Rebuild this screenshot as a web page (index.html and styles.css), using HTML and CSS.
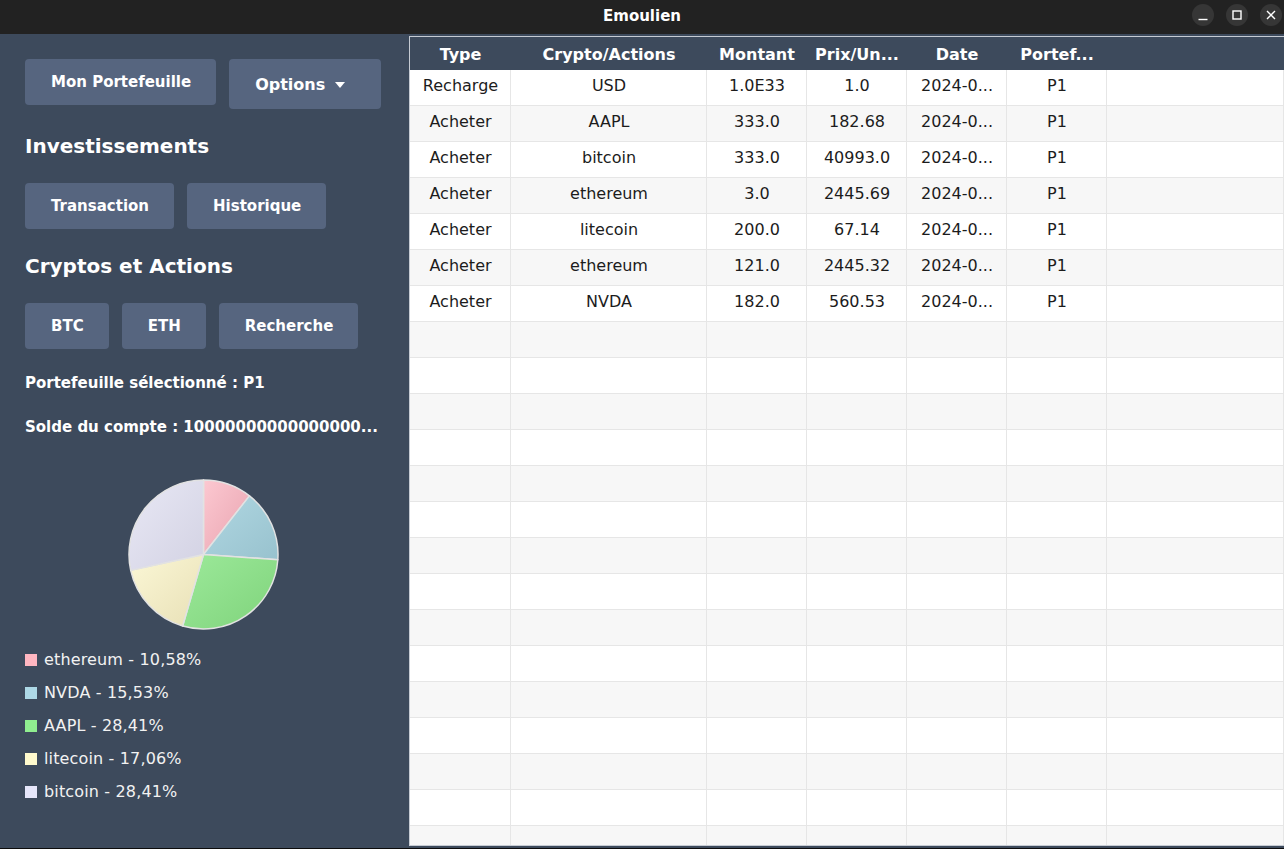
FILE: index.html
```html
<!DOCTYPE html>
<html lang="fr">
<head>
<meta charset="utf-8">
<title>Emoulien</title>
<link rel="stylesheet" href="styles.css">
</head>
<body>
<div class="window">
  <header class="titlebar">
    <div class="title">Emoulien</div>
    <div class="controls">
      <span class="ctl"><svg width="22" height="22" viewBox="0 0 22 22"><path d="M6.5 15.5h9" stroke="#fff" stroke-width="1.4" fill="none"/></svg></span>
      <span class="ctl"><svg width="22" height="22" viewBox="0 0 22 22"><rect x="7" y="7" width="8" height="8" stroke="#fff" stroke-width="1.4" fill="none"/></svg></span>
      <span class="ctl"><svg width="22" height="22" viewBox="0 0 22 22"><path d="M7 7l8 8M15 7l-8 8" stroke="#fff" stroke-width="1.4" fill="none"/></svg></span>
    </div>
  </header>
  <main class="main">
    <aside class="sidebar">
      <div class="btn-row top-row">
        <button class="btn">Mon Portefeuille</button>
        <button class="btn btn-menu">Options <span class="caret"></span></button>
      </div>
      <h2 class="heading">Investissements</h2>
      <div class="btn-row">
        <button class="btn">Transaction</button>
        <button class="btn">Historique</button>
      </div>
      <h2 class="heading">Cryptos et Actions</h2>
      <div class="btn-row">
        <button class="btn">BTC</button>
        <button class="btn">ETH</button>
        <button class="btn">Recherche</button>
      </div>
      <p class="info first">Portefeuille sélectionné : P1</p>
      <p class="info second">Solde du compte : 10000000000000000...</p>
      <svg class="pie" width="151" height="151" viewBox="-75.5 -75.5 151 151">
        <defs>
          <linearGradient id="gPink" x1="0" y1="0" x2="1" y2="1"><stop offset="0" stop-color="#fcc8d1"/><stop offset="1" stop-color="#e8a3af"/></linearGradient>
          <linearGradient id="gBlue" x1="0" y1="0" x2="1" y2="1"><stop offset="0" stop-color="#b0d7e2"/><stop offset="1" stop-color="#98c2ce"/></linearGradient>
          <linearGradient id="gGreen" x1="0" y1="0" x2="1" y2="1"><stop offset="0" stop-color="#9ce99a"/><stop offset="1" stop-color="#7fd37b"/></linearGradient>
          <linearGradient id="gYellow" x1="0" y1="0" x2="1" y2="1"><stop offset="0" stop-color="#fbf7d6"/><stop offset="1" stop-color="#e8e0b6"/></linearGradient>
          <linearGradient id="gLav" x1="0" y1="0" x2="1" y2="1"><stop offset="0" stop-color="#e8e8f5"/><stop offset="1" stop-color="#d3d2e3"/></linearGradient>
        </defs>
        <g stroke="#e2e2e2" stroke-width="1.5" stroke-linejoin="round">
          <path d="M0 0L0 -74.5A74.5 74.5 0 0 1 45.95 -58.64Z" fill="url(#gPink)"/>
          <path d="M0 0L45.95 -58.64A74.5 74.5 0 0 1 74.32 5.2Z" fill="url(#gBlue)"/>
          <path d="M0 0L74.32 5.2A74.5 74.5 0 0 1 -20.87 71.51Z" fill="url(#gGreen)"/>
          <path d="M0 0L-20.87 71.51A74.5 74.5 0 0 1 -72.79 15.88Z" fill="url(#gYellow)"/>
          <path d="M0 0L-72.79 15.88A74.5 74.5 0 0 1 0 -74.5Z" fill="url(#gLav)"/>
        </g>
      </svg>
      <ul class="legend">
        <li><span class="sw sw-pink"></span>ethereum - 10,58%</li>
        <li><span class="sw sw-blue"></span>NVDA - 15,53%</li>
        <li><span class="sw sw-green"></span>AAPL - 28,41%</li>
        <li><span class="sw sw-yellow"></span>litecoin - 17,06%</li>
        <li><span class="sw sw-lav"></span>bitcoin - 28,41%</li>
      </ul>
    </aside>
    <section class="table-wrap">
      <div class="row head">
        <div class="cell">Type</div><div class="cell">Crypto/Actions</div><div class="cell">Montant</div><div class="cell">Prix/Un...</div><div class="cell">Date</div><div class="cell">Portef...</div><div class="cell"></div>
      </div>
      <div class="row"><div class="cell">Recharge</div><div class="cell">USD</div><div class="cell">1.0E33</div><div class="cell">1.0</div><div class="cell">2024-0...</div><div class="cell">P1</div><div class="cell"></div></div>
      <div class="row"><div class="cell">Acheter</div><div class="cell">AAPL</div><div class="cell">333.0</div><div class="cell">182.68</div><div class="cell">2024-0...</div><div class="cell">P1</div><div class="cell"></div></div>
      <div class="row"><div class="cell">Acheter</div><div class="cell">bitcoin</div><div class="cell">333.0</div><div class="cell">40993.0</div><div class="cell">2024-0...</div><div class="cell">P1</div><div class="cell"></div></div>
      <div class="row"><div class="cell">Acheter</div><div class="cell">ethereum</div><div class="cell">3.0</div><div class="cell">2445.69</div><div class="cell">2024-0...</div><div class="cell">P1</div><div class="cell"></div></div>
      <div class="row"><div class="cell">Acheter</div><div class="cell">litecoin</div><div class="cell">200.0</div><div class="cell">67.14</div><div class="cell">2024-0...</div><div class="cell">P1</div><div class="cell"></div></div>
      <div class="row"><div class="cell">Acheter</div><div class="cell">ethereum</div><div class="cell">121.0</div><div class="cell">2445.32</div><div class="cell">2024-0...</div><div class="cell">P1</div><div class="cell"></div></div>
      <div class="row"><div class="cell">Acheter</div><div class="cell">NVDA</div><div class="cell">182.0</div><div class="cell">560.53</div><div class="cell">2024-0...</div><div class="cell">P1</div><div class="cell"></div></div>
      <div class="row"><div class="cell"></div><div class="cell"></div><div class="cell"></div><div class="cell"></div><div class="cell"></div><div class="cell"></div><div class="cell"></div></div>
      <div class="row"><div class="cell"></div><div class="cell"></div><div class="cell"></div><div class="cell"></div><div class="cell"></div><div class="cell"></div><div class="cell"></div></div>
      <div class="row"><div class="cell"></div><div class="cell"></div><div class="cell"></div><div class="cell"></div><div class="cell"></div><div class="cell"></div><div class="cell"></div></div>
      <div class="row"><div class="cell"></div><div class="cell"></div><div class="cell"></div><div class="cell"></div><div class="cell"></div><div class="cell"></div><div class="cell"></div></div>
      <div class="row"><div class="cell"></div><div class="cell"></div><div class="cell"></div><div class="cell"></div><div class="cell"></div><div class="cell"></div><div class="cell"></div></div>
      <div class="row"><div class="cell"></div><div class="cell"></div><div class="cell"></div><div class="cell"></div><div class="cell"></div><div class="cell"></div><div class="cell"></div></div>
      <div class="row"><div class="cell"></div><div class="cell"></div><div class="cell"></div><div class="cell"></div><div class="cell"></div><div class="cell"></div><div class="cell"></div></div>
      <div class="row"><div class="cell"></div><div class="cell"></div><div class="cell"></div><div class="cell"></div><div class="cell"></div><div class="cell"></div><div class="cell"></div></div>
      <div class="row"><div class="cell"></div><div class="cell"></div><div class="cell"></div><div class="cell"></div><div class="cell"></div><div class="cell"></div><div class="cell"></div></div>
      <div class="row"><div class="cell"></div><div class="cell"></div><div class="cell"></div><div class="cell"></div><div class="cell"></div><div class="cell"></div><div class="cell"></div></div>
      <div class="row"><div class="cell"></div><div class="cell"></div><div class="cell"></div><div class="cell"></div><div class="cell"></div><div class="cell"></div><div class="cell"></div></div>
      <div class="row"><div class="cell"></div><div class="cell"></div><div class="cell"></div><div class="cell"></div><div class="cell"></div><div class="cell"></div><div class="cell"></div></div>
      <div class="row"><div class="cell"></div><div class="cell"></div><div class="cell"></div><div class="cell"></div><div class="cell"></div><div class="cell"></div><div class="cell"></div></div>
      <div class="row"><div class="cell"></div><div class="cell"></div><div class="cell"></div><div class="cell"></div><div class="cell"></div><div class="cell"></div><div class="cell"></div></div>
      <div class="row"><div class="cell"></div><div class="cell"></div><div class="cell"></div><div class="cell"></div><div class="cell"></div><div class="cell"></div><div class="cell"></div></div>
    </section>
  </main>
</div>
</body>
</html>
```
FILE: styles.css
```css
* { box-sizing: border-box; }
html, body { margin: 0; padding: 0; }
body {
  background: #0c0c0c;
  font-family: "DejaVu Sans", "Liberation Sans", sans-serif;
  width: 1284px;
  height: 849px;
  overflow: hidden;
}
.window { width: 1284px; }
.titlebar {
  height: 34px;
  background: #222222;
  display: flex;
  align-items: center;
  justify-content: center;
  position: relative;
}
.title {
  color: #ffffff;
  font-weight: bold;
  font-size: 15px;
  line-height: 34px;
  padding-bottom: 3px;
}
.controls {
  position: absolute;
  right: 2px;
  top: 4px;
  display: flex;
  gap: 12px;
}
.ctl {
  width: 22px;
  height: 22px;
  border-radius: 50%;
  background: #363636;
  display: block;
}
.ctl svg { display: block; }
.main {
  display: flex;
  height: 814px;
  background: #3d4a5c;
}
.sidebar {
  width: 409px;
  flex: none;
  padding: 25px 0 0 25px;
  color: #ffffff;
}
.btn-row {
  display: flex;
  gap: 13px;
  align-items: flex-start;
}
.btn {
  height: 46px;
  padding: 0 25px 0 26px;
  border: none;
  border-radius: 4px;
  background: #56657f;
  color: #ffffff;
  font-family: "DejaVu Sans", sans-serif;
  font-weight: bold;
  font-size: 15px;
  display: flex;
  align-items: center;
}
.btn-menu {
  height: 50px;
  font-size: 16px;
  padding: 0 36px 0 26px;
}
.caret {
  display: inline-block;
  width: 0;
  height: 0;
  border-left: 5px solid transparent;
  border-right: 5px solid transparent;
  border-top: 6px solid #ffffff;
  margin-left: 10px;
  margin-top: 1px;
}
.heading {
  margin: 25px 0 0 0;
  font-size: 20px;
  line-height: 24px;
  font-weight: bold;
}
.heading + .btn-row { margin-top: 25px; }
.info {
  margin: 0;
  font-size: 15px;
  line-height: 20px;
  font-weight: bold;
}
.info.first { margin-top: 24px; }
.info.second { margin-top: 24px; }
.pie {
  display: block;
  margin: 42px 0 0 103px;
}
.legend {
  list-style: none;
  margin: 13px 0 0 0;
  padding: 0;
}
.legend li {
  display: flex;
  align-items: center;
  height: 33px;
  font-size: 16px;
  letter-spacing: 0.15px;
  color: #f2f2f2;
}
.sw {
  width: 12px;
  height: 12px;
  margin-right: 7px;
  flex: none;
}
.sw-pink { background: #ffb6c1; }
.sw-blue { background: #add8e6; }
.sw-green { background: #90ee90; }
.sw-yellow { background: #fffacd; }
.sw-lav { background: #e6e6fa; }

.table-wrap {
  flex: 1;
  margin: 2px 0 2px 0;
  border: 1px solid #c6cbd3;
  border-right: none;
  background: #ffffff;
  overflow: hidden;
}
.row {
  display: grid;
  grid-template-columns: 101px 196px 100px 100px 100px 100px 1fr;
  height: 36px;
}
.row:nth-child(odd) { background: #f7f7f7; }
.row:nth-child(even) { background: #ffffff; }
.cell {
  border-right: 1px solid #e6e6e6;
  border-bottom: 1px solid #e6e6e6;
  display: flex;
  align-items: center;
  justify-content: center;
  font-size: 16px;
  color: #1c1c1c;
  padding: 0 0 4px 1px;
  white-space: nowrap;
  overflow: hidden;
}
.row.head {
  height: 33px;
  background: #3d4a5c;
}
.row.head .cell {
  border: none;
  color: #ffffff;
  font-weight: bold;
  padding: 1px 0 0 0;
}
```
